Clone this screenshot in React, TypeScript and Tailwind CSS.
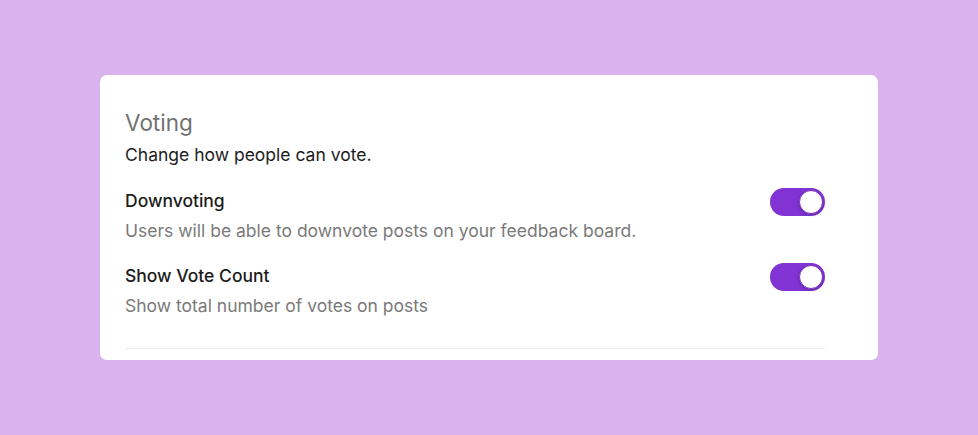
import React from "react";

function Toggle() {
  return (
    <div className="relative w-[55px] h-[28px] rounded-full bg-[#8133d3] shrink-0">
      <div className="absolute right-[2px] top-[2px] w-[24px] h-[24px] rounded-full bg-white border border-[#7a2fcf] shadow-[0_1px_3px_rgba(0,0,0,0.25)]" />
    </div>
  );
}

function Row({ title, desc }: { title: string; desc: string }) {
  return (
    <div className="flex items-start justify-between">
      <div className="flex flex-col">
        <div className="text-[17.5px] leading-[26px] font-medium text-[#1c1c1c]">{title}</div>
        <div className="text-[17.5px] leading-[26px] text-[#7a7a7a] mt-[4px]">{desc}</div>
      </div>
      <Toggle />
    </div>
  );
}

export default function App() {
  return (
    <div
      className="w-[978px] h-[435px] bg-[#dab3ee] pt-[75px] pl-[100px]"
      style={{ fontFamily: "Inter, 'Noto Sans', sans-serif" }}
    >
      <div className="w-[778px] h-[285px] bg-white rounded-[7px] pl-[25px] pr-[53px] pt-[33px]">
        <div className="text-[22.5px] leading-[30px] text-[#727272]">Voting</div>
        <div className="text-[17.5px] leading-[26px] text-[#1c1c1c] mt-[4px]">Change how people can vote.</div>
        <div className="mt-[20px] flex flex-col gap-[19px]">
          <Row title="Downvoting" desc="Users will be able to downvote posts on your feedback board." />
          <Row title="Show Vote Count" desc="Show total number of votes on posts" />
        </div>
        <div className="mt-[29px] border-t border-[#ececec]" />
      </div>
    </div>
  );
}
